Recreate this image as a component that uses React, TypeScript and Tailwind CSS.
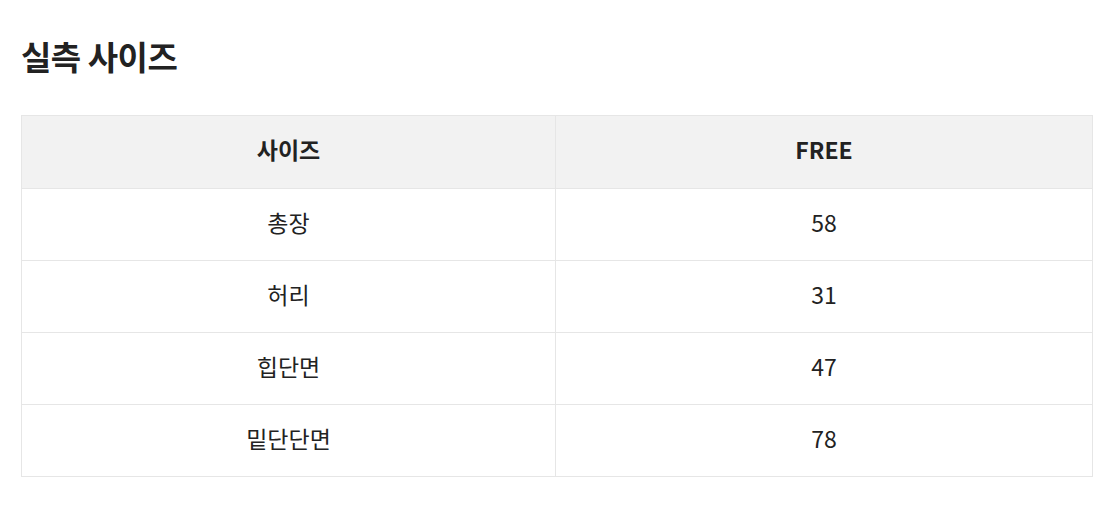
const rows: [string, string][] = [
  ['총장', '58'],
  ['허리', '31'],
  ['힙단면', '47'],
  ['밑단단면', '78'],
];

export default function App() {
  return (
    <div
      className="min-h-screen bg-white pl-[21px] pt-[32px] text-[#222]"
      style={{ fontFamily: '"Noto Sans CJK KR", "Noto Sans", sans-serif' }}
    >
      <h2 className="text-[33px] font-bold leading-[48px] tracking-[-0.5px]">실측 사이즈</h2>

      <div className="mt-[35px] grid w-[1072px] grid-cols-[534px_1fr] border-l border-t border-[#e6e6e6] text-[23px]">
        <div className="flex h-[73px] items-center justify-center border-b border-r border-[#e6e6e6] bg-[#f2f2f2] pb-[5px] font-bold">
          사이즈
        </div>
        <div className="flex h-[73px] items-center justify-center border-b border-r border-[#e6e6e6] bg-[#f2f2f2] pb-[5px] font-bold">
          FREE
        </div>
        {rows.map(([label, value]) => (
          <div key={label} className="contents">
            <div className="flex h-[72px] items-center justify-center border-b border-r border-[#e6e6e6] pb-[5px]">
              {label}
            </div>
            <div className="flex h-[72px] items-center justify-center border-b border-r border-[#e6e6e6] pb-[5px]">
              {value}
            </div>
          </div>
        ))}
      </div>
    </div>
  );
}
